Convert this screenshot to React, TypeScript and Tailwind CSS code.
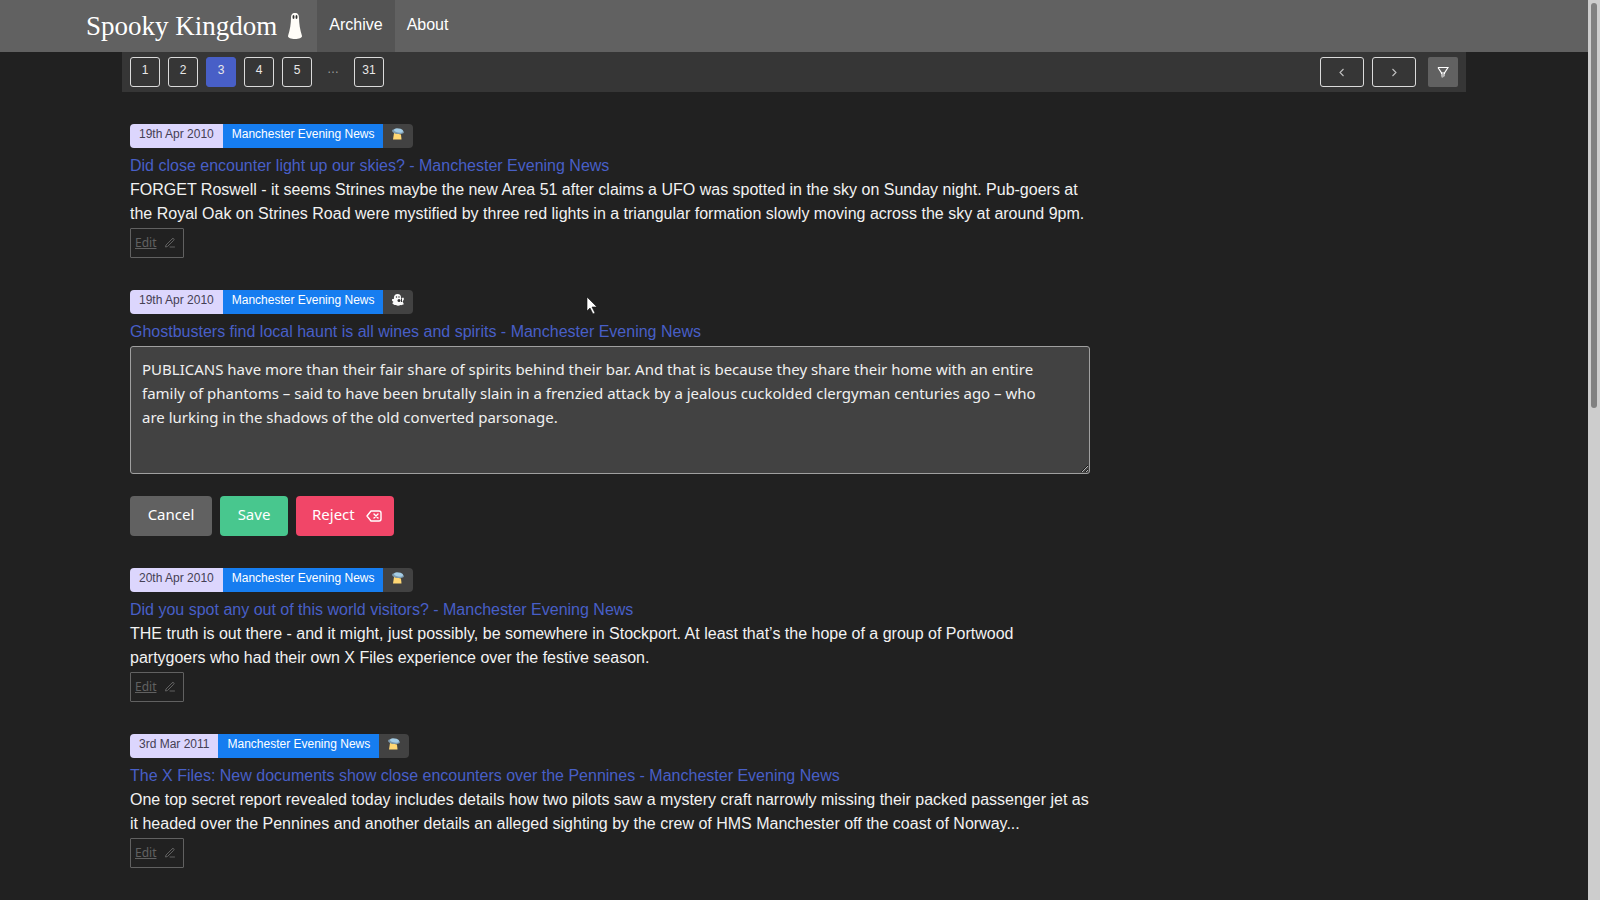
import { FiEdit3 } from 'react-icons/fi';
import clsx from 'clsx';

type Kind = 'ufo' | 'ghost';

type Article = {
  date: string;
  source: string;
  kind: Kind;
  title: string;
  text: string;
  editing?: boolean;
};

const articles: Article[] = [
  {
    date: '19th Apr 2010',
    source: 'Manchester Evening News',
    kind: 'ufo',
    title: 'Did close encounter light up our skies? - Manchester Evening News',
    text: 'FORGET Roswell - it seems Strines maybe the new Area 51 after claims a UFO was spotted in the sky on Sunday night. Pub-goers at the Royal Oak on Strines Road were mystified by three red lights in a triangular formation slowly moving across the sky at around 9pm.',
  },
  {
    date: '19th Apr 2010',
    source: 'Manchester Evening News',
    kind: 'ghost',
    title: 'Ghostbusters find local haunt is all wines and spirits - Manchester Evening News',
    text: 'PUBLICANS have more than their fair share of spirits behind their bar. And that is because they share their home with an entire family of phantoms – said to have been brutally slain in a frenzied attack by a jealous cuckolded clergyman centuries ago – who are lurking in the shadows of the old converted parsonage.',
    editing: true,
  },
  {
    date: '20th Apr 2010',
    source: 'Manchester Evening News',
    kind: 'ufo',
    title: 'Did you spot any out of this world visitors? - Manchester Evening News',
    text: 'THE truth is out there - and it might, just possibly, be somewhere in Stockport. At least that’s the hope of a group of Portwood partygoers who had their own X Files experience over the festive season.',
  },
  {
    date: '3rd Mar 2011',
    source: 'Manchester Evening News',
    kind: 'ufo',
    title: 'The X Files: New documents show close encounters over the Pennines - Manchester Evening News',
    text: 'One top secret report revealed today includes details how two pilots saw a mystery craft narrowly missing their packed passenger jet as it headed over the Pennines and another details an alleged sighting by the crew of HMS Manchester off the coast of Norway...',
  },
];

function KindIcon({ kind }: { kind: Kind }) {
  if (kind === 'ghost') {
    return (
      <svg viewBox="0 0 24 24" className="h-3 w-3" role="img" aria-label="Ghost">
        <path
          d="M4 9C3 4 6 0 11 0c5 0 7 3 7 7l1 4c1-1 1-4 3-4 3 1 2 5-1 8 1 2 3 4 2 6-2 0-4 2-6 1-3 2-7 2-9 0-2 0-4 0-6-2-2-1-1-3 1-4-2-1-4-3-3-5 1-2 3 0 4-2z"
          fill="#fafafa"
        />
        <circle cx="9" cy="6" r="1.5" fill="#333" />
        <circle cx="14" cy="6" r="1.5" fill="#333" />
        <circle cx="14" cy="13" r="3" fill="#333" />
        <path d="M19 10v6" stroke="#333" strokeWidth="2" />
      </svg>
    );
  }
  return (
    <svg viewBox="0 0 24 24" className="h-3 w-3" role="img" aria-label="UFO">
      <path d="M4 10l14 3 1 10H2z" fill="#ffd774" />
      <ellipse cx="12" cy="7" rx="12" ry="5" transform="rotate(8 12 7)" fill="#7d9bb0" />
      <ellipse cx="13" cy="5" rx="9" ry="4" transform="rotate(8 13 5)" fill="#a5cde6" />
    </svg>
  );
}

function FilterIcon() {
  return (
    <svg viewBox="0 0 12 12" className="h-3 w-3" aria-hidden="true">
      <path d="M4 6h4v4l-3 2-1-2z" fill="#b5b5b5" />
      <path d="M1 1.500h10L7.500 7v1M1 1.500L4.500 7v1" fill="none" stroke="#fff" strokeWidth="1.2" />
    </svg>
  );
}

function BackspaceIcon() {
  return (
    <svg
      viewBox="0 0 16 12"
      className="h-3 w-4"
      fill="none"
      stroke="currentColor"
      strokeWidth="1.4"
      strokeLinejoin="round"
      strokeLinecap="round"
      aria-hidden="true"
    >
      <path d="M5 1h8q2 0 2 2v6q0 2-2 2H5L1 6z" />
      <path d="M8 4l4 4M12 4L8 8" />
    </svg>
  );
}

function Chevron({ d }: { d: string }) {
  return (
    <svg viewBox="0 0 8 9" className="h-[9px] w-2" fill="none" stroke="#c0c0c0" strokeWidth="1.1" aria-hidden="true">
      <path d={d} />
    </svg>
  );
}

function Navbar() {
  return (
    <nav className="bg-[#616161]">
      <div className="mx-auto flex h-13 max-w-[1440px]">
        <a href="#" className="flex items-center gap-2 px-3 text-white">
          <span className="font-['Liberation_Serif',serif] text-[27px] leading-9">Spooky Kingdom</span>
          <svg viewBox="0 0 20 28" className="h-7 w-5" aria-hidden="true">
            <path
              d="M10 1c3 0 4 2 4 5 0 5 1 12 3 18 0 2-3 3-7 3s-7-1-7-3C5 18 6 11 6 6c0-3 1-5 4-5z"
              fill="#fffdf8"
            />
            <ellipse cx="8.5" cy="5" rx="1" ry="2" fill="#333" />
            <ellipse cx="11.5" cy="5" rx="1" ry="2" fill="#333" />
          </svg>
        </a>
        <a href="#archive" className="bg-[#545454] px-3 pt-[13px] leading-6 text-white">
          Archive
        </a>
        <a href="#about" className="px-3 pt-[13px] leading-6 text-white">
          About
        </a>
      </div>
    </nav>
  );
}

function Pagination() {
  const pages = ['1', '2', '3', '4', '5', '…', '31'];
  return (
    <div className="mx-auto flex h-10 max-w-[1344px] items-center justify-between bg-[#363636] px-2 text-xs text-[#e8e8e8]">
      <div className="flex gap-2">
        {pages.map((page) =>
          page === '…' ? (
            <span key={page} className="w-[26px] text-center leading-6 text-[#a0a0a0]">
              …
            </span>
          ) : (
            <button
              key={page}
              className={clsx(
                'h-[30px] w-[30px] rounded-[3px] border pb-1',
                page === '3' ? 'border-[#485fc7] bg-[#485fc7]' : 'border-[#dbdbdb]',
              )}
            >
              {page}
            </button>
          ),
        )}
      </div>
      <div className="flex gap-2">
        <button aria-label="Previous page" className="flex h-[30px] w-11 items-center justify-center rounded-[3px] border border-[#dbdbdb]">
          <Chevron d="M5.5 1L2 4.5 5.5 8" />
        </button>
        <button aria-label="Next page" className="flex h-[30px] w-11 items-center justify-center rounded-[3px] border border-[#dbdbdb]">
          <Chevron d="M2.5 1L6 4.5 2.5 8" />
        </button>
        <button aria-label="Filter" className="ml-1 flex h-[30px] w-[30px] items-center justify-center rounded-xs bg-[#616161]">
          <FilterIcon />
        </button>
      </div>
    </div>
  );
}

function Tags({ article }: { article: Article }) {
  return (
    <div className="flex h-6 text-xs leading-5">
      <span className="rounded-l-sm bg-[#dcd6fd] px-[9px] text-[#454054]">{article.date}</span>
      <span className="bg-[#167df0] px-[9px] text-white">{article.source}</span>
      <span className="flex w-[30px] justify-center rounded-r-sm bg-[#424242] pt-1">
        <KindIcon kind={article.kind} />
      </span>
    </div>
  );
}

function Editor({ article }: { article: Article }) {
  return (
    <>
      <textarea
        aria-label={article.title}
        defaultValue={article.text}
        className="mt-0.5 block h-32 w-full rounded-[3px] border border-[#a0a0a0] bg-[#424242] py-[10px] pr-10 pl-[11px] font-['Noto_Sans',sans-serif] text-[15px] leading-6 text-[#f0f0f0]"
      />
      <div className="mt-[22px] flex gap-2 font-['Noto_Sans',sans-serif] text-[15px] text-white">
        <button className="h-10 w-[82px] rounded-sm bg-[#616161] pb-1">Cancel</button>
        <button className="h-10 w-[68px] rounded-sm bg-[#48c78e] pb-1">Save</button>
        <button className="flex h-10 w-[98px] items-center justify-between rounded-sm bg-[#f14668] pr-3 pl-4">
          <span className="pb-1">Reject</span>
          <BackspaceIcon />
        </button>
      </div>
    </>
  );
}

function ArticleItem({ article }: { article: Article }) {
  return (
    <article>
      <Tags article={article} />
      <h2 className="mt-1.5 leading-6">
        <a href="#article" className="text-[#485fc7]">
          {article.title}
        </a>
      </h2>
      {article.editing ? (
        <Editor article={article} />
      ) : (
        <>
          <p className="leading-6 text-[#f2f2f2]">{article.text}</p>
          <button className="mt-0.5 flex h-[30px] w-[54px] items-center gap-2 rounded-[1px] border border-[#616161] pl-1 font-['Noto_Sans',sans-serif] text-xs text-[#616161]">
            <span className="underline">Edit</span>
            <FiEdit3 className="h-3 w-3" />
          </button>
        </>
      )}
    </article>
  );
}

export default function App() {
  return (
    <div className="relative flex min-h-screen bg-[#212121] font-['Liberation_Sans',sans-serif] text-base">
      <div className="min-w-0 flex-1">
        <Navbar />
        <main>
          <Pagination />
          <div className="mx-auto max-w-[1344px] px-2 py-8">
            <div className="flex max-w-[960px] flex-col gap-8">
              {articles.map((article) => (
                <ArticleItem key={article.title} article={article} />
              ))}
            </div>
          </div>
        </main>
      </div>
      <div className="w-3 bg-[#cdcdcd] px-[3px] pt-[3px]" aria-hidden="true">
        <div className="h-[405px] rounded-full bg-[#808080]" />
      </div>
      <svg viewBox="0 0 12 19" className="pointer-events-none absolute top-[296px] left-[586px] h-[19px] w-3" aria-hidden="true">
        <path d="M1 1v14l3-3 3 6 2-1-3-6h5z" fill="#fff" stroke="#111" strokeWidth="0.6" />
      </svg>
    </div>
  );
}
